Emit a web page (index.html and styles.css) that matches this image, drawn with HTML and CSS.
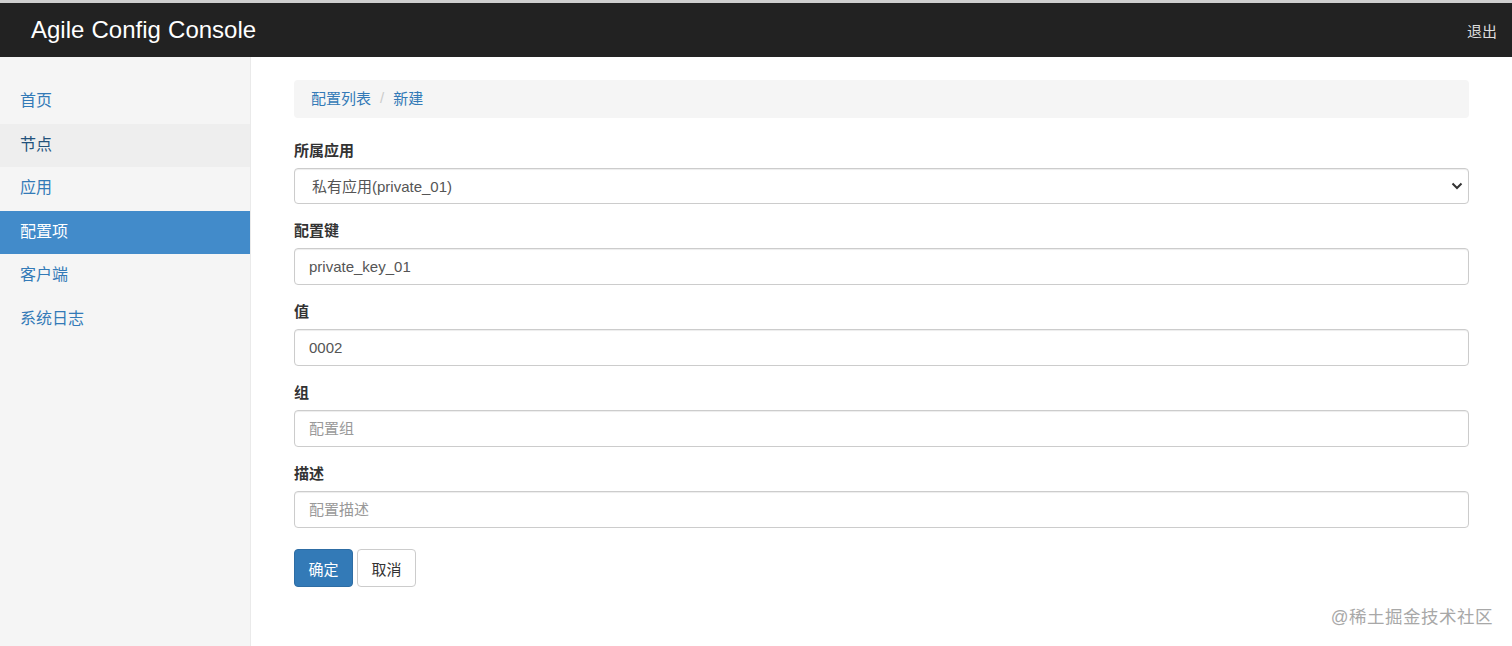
FILE: index.html
```html
<!DOCTYPE html>
<html lang="zh-CN">
<head>
<meta charset="utf-8">
<title>Agile Config Console</title>
<link rel="stylesheet" href="styles.css">
</head>
<body>
<header class="topbar">
  <a class="brand" href="#">Agile Config Console</a>
  <a class="logout" href="#">退出</a>
</header>
<div class="layout">
  <nav class="sidebar">
    <ul class="nav">
      <li><a href="#">首页</a></li>
      <li class="hover"><a href="#">节点</a></li>
      <li><a href="#">应用</a></li>
      <li class="active"><a href="#">配置项</a></li>
      <li><a href="#">客户端</a></li>
      <li><a href="#">系统日志</a></li>
    </ul>
  </nav>
  <main class="main">
    <ol class="breadcrumb">
      <li><a href="#">配置列表</a></li>
      <li class="sep">/</li>
      <li><a href="#">新建</a></li>
    </ol>
    <form class="form">
      <div class="group">
        <label class="label">所属应用</label>
        <div class="select-wrap">
          <select class="control select">
            <option>私有应用(private_01)</option>
          </select>
          <svg class="chevron" width="12" height="8" viewBox="0 0 12 8"><path d="M1.5 1.5 L6 6 L10.5 1.5" fill="none" stroke="#333" stroke-width="2"/></svg>
        </div>
      </div>
      <div class="group">
        <label class="label">配置键</label>
        <input class="control" type="text" value="private_key_01">
      </div>
      <div class="group">
        <label class="label">值</label>
        <input class="control" type="text" value="0002">
      </div>
      <div class="group">
        <label class="label">组</label>
        <input class="control" type="text" placeholder="配置组">
      </div>
      <div class="group">
        <label class="label">描述</label>
        <input class="control" type="text" placeholder="配置描述">
      </div>
      <div class="actions">
        <button type="button" class="btn btn-primary">确定</button>
        <button type="button" class="btn btn-default">取消</button>
      </div>
    </form>
  </main>
</div>
<div class="watermark">@稀土掘金技术社区</div>
</body>
</html>
```

FILE: styles.css
```css
* { box-sizing: border-box; }
html, body { height: 100%; }
body {
  margin: 0;
  font-family: "Liberation Sans", "Noto Sans CJK SC", sans-serif;
  font-size: 15px;
  color: #333;
  background: #fff;
  display: flex;
  flex-direction: column;
  overflow: hidden;
}
a { text-decoration: none; }

.topbar {
  flex: 0 0 auto;
  height: 57px;
  border-top: 3px solid #cfcfcf;
  background: #222;
  display: flex;
  align-items: center;
  justify-content: space-between;
  padding: 0 15px 0 31px;
}
.brand {
  color: #fff;
  font-size: 24px;
  letter-spacing: 0;
  word-spacing: 0.5px;
}
.logout {
  color: #ddd;
  font-size: 15px;
}

.layout {
  flex: 1 1 auto;
  display: flex;
  min-height: 0;
}
.sidebar {
  width: 251px;
  flex: 0 0 251px;
  background: #f5f5f5;
  border-right: 1px solid #eaeaea;
  padding-top: 23px;
}
.nav {
  list-style: none;
  margin: 0;
  padding: 0;
}
.nav li a {
  display: block;
  height: 43.6px;
  line-height: 42px;
  padding: 0 20px;
  font-size: 16px;
  color: #337ab7;
}
.nav li.hover a {
  background: #eee;
  color: #23527c;
}
.nav li.active a {
  background: #428bca;
  color: #fff;
}

.main {
  flex: 1 1 auto;
  padding: 23px 43px 0 43px;
}
.breadcrumb {
  list-style: none;
  margin: 0 0 22px 0;
  height: 38px;
  padding: 0 17px 3px;
  background: #f5f5f5;
  border-radius: 4px;
  display: flex;
  align-items: center;
  gap: 9px;
  font-size: 15px;
}
.breadcrumb a { color: #337ab7; }
.breadcrumb .sep { color: #ccc; }

.group {
  margin-bottom: 16px;
}
.label {
  display: block;
  font-weight: bold;
  font-size: 15px;
  line-height: 22px;
  margin-bottom: 6px;
  color: #333;
}
.control {
  display: block;
  width: 100%;
  height: 37px;
  padding: 0 14px;
  font-family: inherit;
  font-size: 15px;
  color: #555;
  background: #fff;
  border: 1px solid #ccc;
  border-radius: 4px;
  box-shadow: inset 0 1px 1px rgba(0,0,0,.075);
  outline: none;
}
.control::placeholder { color: #999; }
.select-wrap { position: relative; }
.select {
  appearance: none;
  -webkit-appearance: none;
  padding-left: 17px;
  height: 36px;
}
.chevron {
  position: absolute;
  right: 6px;
  top: 14px;
}

.actions {
  display: flex;
  gap: 4px;
  margin-top: 21px;
}
.btn {
  height: 38px;
  width: 59px;
  padding: 0;
  font-family: inherit;
  font-size: 15px;
  border-radius: 4px;
  border: 1px solid;
  cursor: pointer;
}
.btn-primary {
  background: #337ab7;
  border-color: #2e6da4;
  color: #fff;
}
.btn-default {
  background: #fff;
  border-color: #ccc;
  color: #333;
}

.watermark {
  position: absolute;
  right: 19px;
  bottom: 18px;
  font-size: 17.5px;
  color: #a8a8a8;
  letter-spacing: 0.5px;
}
```
